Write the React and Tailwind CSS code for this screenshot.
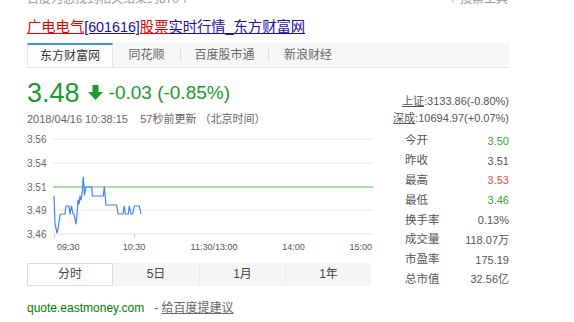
// Stock quote card from a search result page — title, source tabs, price, intraday chart, stats.
const font = "font-['Liberation_Sans','Noto_Sans_CJK_SC',sans-serif]";

const pricePts = [
  [54, 196], [55, 224], [57, 233], [58.5, 226], [60, 215], [62, 214], [65, 214], [66, 206], [69, 206],
  [70, 214], [71.5, 206], [73, 214], [74, 214], [76, 224], [77, 214], [78, 200], [79, 204], [80, 196],
  [81, 200], [82, 194], [83.3, 177], [84.5, 195], [86, 187], [91.7, 187], [92.3, 196], [103.3, 196],
  [104.3, 187], [106, 205], [116.7, 205], [118, 214], [123, 214], [124.3, 206], [125.3, 214],
  [128.3, 214], [129.3, 206], [131, 214], [132.7, 214], [134.3, 206], [139.3, 206], [141, 214],
];

const stats = [
  ['今开', '3.50', 'text-[#2fa52f]'],
  ['昨收', '3.51', 'text-[#555]'],
  ['最高', '3.53', 'text-[#f2474d]'],
  ['最低', '3.46', 'text-[#2fa52f]'],
  ['换手率', '0.13%', 'text-[#555]'],
  ['成交量', '118.07万', 'text-[#555]'],
  ['市盈率', '175.19', 'text-[#555]'],
  ['总市值', '32.56亿', 'text-[#555]'],
];

function Chart() {
  const grid = [139, 163, 210];
  const yLabels = [[139, '3.56'], [163, '3.54'], [187, '3.51'], [210, '3.49'], [234, '3.46']];
  return (
    <svg width="346" height="128" viewBox="27 127 346 128" className="block">
      {grid.map((y) => (
        <line key={y} x1="53" x2="373" y1={y} y2={y} stroke="#e8e8e8" strokeWidth="1" />
      ))}
      <line x1="53" x2="373" y1="234" y2="234" stroke="#e2e2e2" strokeWidth="1" />
      <line x1="53" x2="373" y1="187" y2="187" stroke="#aedba6" strokeWidth="2" />
      <line x1="54.5" x2="54.5" y1="234" y2="238" stroke="#ccc" strokeWidth="1" />
      <line x1="134.5" x2="134.5" y1="234" y2="238" stroke="#ccc" strokeWidth="1" />
      {yLabels.map(([y, t]) => (
        <text key={t} x="27" y={y} dominantBaseline="central" fontSize="10" fill="#666" fontFamily="Liberation Sans, sans-serif">
          {t}
        </text>
      ))}
      <g fontSize="9" fill="#555" fontFamily="Liberation Sans, sans-serif">
        <text x="57" y="247" dominantBaseline="central">09:30</text>
        <text x="134" y="247" dominantBaseline="central" textAnchor="middle">10:30</text>
        <text x="214" y="247" dominantBaseline="central" textAnchor="middle">11:30/13:00</text>
        <text x="293.5" y="247" dominantBaseline="central" textAnchor="middle">14:00</text>
        <text x="372" y="247" dominantBaseline="central" textAnchor="end">15:00</text>
      </g>
      <polyline
        points={pricePts.map((p) => p.join(',')).join(' ')}
        fill="none"
        stroke="#3a86f2"
        strokeWidth="1.2"
        strokeLinejoin="round"
      />
    </svg>
  );
}

export default function App() {
  return (
    <div className={`w-[574px] h-[322px] bg-white overflow-hidden ${font}`}>
      {/* cut-off line from the results page above */}
      <div className="h-[6px] overflow-hidden">
        <div className="-mt-[7px] leading-[13px] text-[12px] text-[#999] flex justify-between pl-[27px] pr-[66px]">
          <span>百度为您找到相关结果约870个</span>
          <span className="flex items-center gap-[3px]">
            <span className="text-[9px]">▽</span>搜索工具
          </span>
        </div>
      </div>

      {/* title link */}
      <div className="mt-[11.3px] pl-[27px] h-[20px] leading-[20px] text-[14.3px] whitespace-nowrap">
        <a className="underline text-[#e10601]">广电电气</a>
        <a className="underline text-[#1a0dab]">[601616]</a>
        <a className="underline text-[#e10601]">股票</a>
        <a className="underline text-[#1a0dab]">实时行情_东方财富网</a>
      </div>

      {/* source tabs */}
      <div className="mt-[5.7px] ml-[27px] w-[482px] h-[25px] flex bg-[#f7f7f7] border-b border-[#e6e6e6] text-[12px]">
        <div className="w-[86px] bg-white border-t-2 border-t-[#3b8ff0] border-x border-x-[#e6e6e6] flex items-center justify-center text-[#333]">
          东方财富网
        </div>
        <div className="w-[67px] flex items-center justify-center text-[#666]">同花顺</div>
        <div className="h-[13px] self-center w-px bg-[#dedede]" />
        <div className="w-[87px] flex items-center justify-center text-[#666]">百度股市通</div>
        <div className="h-[13px] self-center w-px bg-[#dedede]" />
        <div className="w-[78px] flex items-center justify-center text-[#666]">新浪财经</div>
        <div className="flex-1" />
      </div>

      {/* body */}
      <div className="ml-[27px] w-[482px] flex">
        <div className="w-[346px]">
          <div className="mt-[9.6px] h-[30px] flex items-center text-[#1c9a2b]">
            <span className="text-[27px] leading-[30px]">3.48</span>
            <svg width="15" height="15" viewBox="0 0 15 15" className="ml-[8px]">
              <rect x="4.5" y="0" width="6" height="8" fill="#1c9a2b" />
              <polygon points="0,7 15,7 7.5,15" fill="#1c9a2b" />
            </svg>
            <span className="ml-[6px] text-[19px] leading-[30px]">-0.03 (-0.85%)</span>
          </div>
          <div className="mt-[3.3px] h-[16px] leading-[16px] text-[11px] text-[#666] whitespace-nowrap">
            2018/04/16 10:38:15&nbsp;&nbsp;&nbsp; 57秒前更新 （北京时间）
          </div>
          <Chart />
          <div className="mt-[8px] flex h-[23px] text-[12px] text-[#444]">
            <div className="w-[86px] bg-white border border-[#dcdcdc] flex items-center justify-center">分时</div>
            <div className="w-[86px] bg-[#f5f5f5] flex items-center justify-center">5日</div>
            <div className="w-[86px] bg-[#f5f5f5] border-l border-[#ebebeb] flex items-center justify-center">1月</div>
            <div className="w-[86px] bg-[#f5f5f5] border-l border-[#ebebeb] flex items-center justify-center">1年</div>
          </div>
        </div>

        <div className="flex-1 pt-[25.5px] text-[#555]">
          <div className="flex flex-col items-end text-[11px] leading-[17px] whitespace-nowrap">
            <div><span className="underline">上证</span>:3133.86(-0.80%)</div>
            <div><span className="underline">深成</span>:10694.97(+0.07%)</div>
          </div>
          <div className="mt-[3.6px]">
            {stats.map(([label, value, color]) => (
              <div key={label} className="h-[19.8px] flex items-center justify-between pl-[32px] whitespace-nowrap">
                <span className="text-[11.5px]">{label}</span>
                <span className={`text-[11px] ${color}`}>{value}</span>
              </div>
            ))}
          </div>
        </div>
      </div>

      {/* footer */}
      <div className="mt-[10px] ml-[27px] text-[12px] leading-[18px] whitespace-nowrap">
        <span className="text-[#008000]">quote.eastmoney.com</span>
        <span className="text-[#666]">&nbsp;&nbsp; - </span>
        <a className="underline text-[#666]">给百度提建议</a>
      </div>
    </div>
  );
}
